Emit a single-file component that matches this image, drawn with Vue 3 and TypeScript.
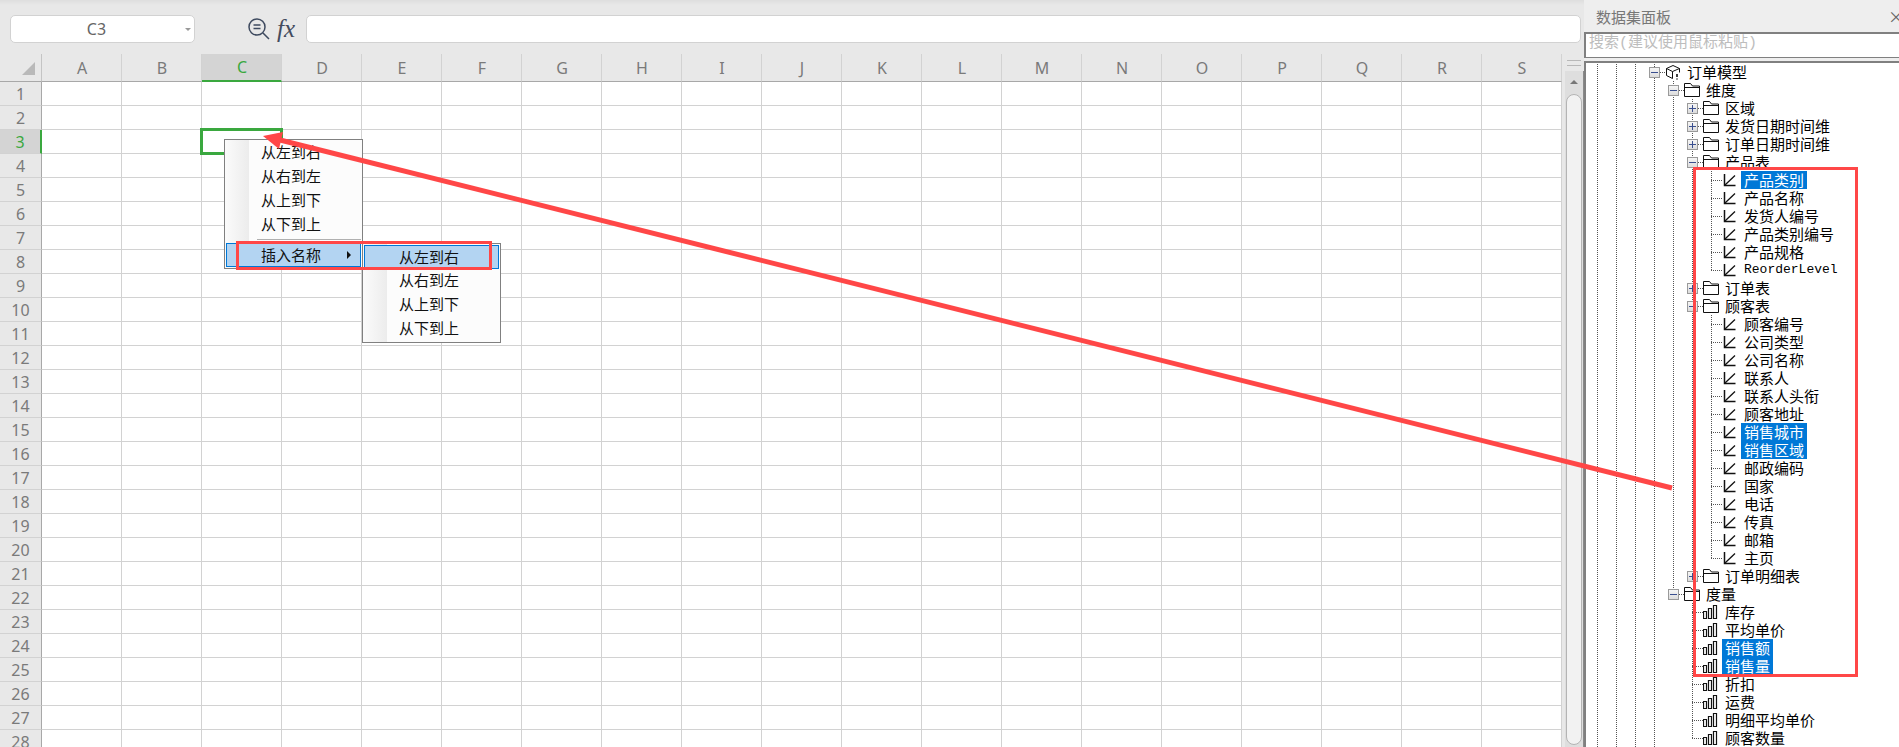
<script setup lang="ts">
type Kind = 'cube' | 'folder' | 'dim' | 'measure'

interface TreeRow {
  label: string
  depth: number
  kind: Kind
  open?: boolean
  selected?: boolean
  mono?: boolean
}

const columns = 'ABCDEFGHIJKLMNOPQRS'.split('')
const rowCount = 28
const sortItems = ['从左到右', '从右到左', '从上到下', '从下到上']

const dims = (labels: string[], selected: string[] = []): TreeRow[] =>
  labels.map((label) => ({ label, depth: 3, kind: 'dim', selected: selected.includes(label) }))

const measures = (labels: string[], selected: string[] = []): TreeRow[] =>
  labels.map((label) => ({ label, depth: 2, kind: 'measure', selected: selected.includes(label) }))

const rows: TreeRow[] = [
  { label: '订单模型', depth: 0, kind: 'cube', open: true },
  { label: '维度', depth: 1, kind: 'folder', open: true },
  { label: '区域', depth: 2, kind: 'folder', open: false },
  { label: '发货日期时间维', depth: 2, kind: 'folder', open: false },
  { label: '订单日期时间维', depth: 2, kind: 'folder', open: false },
  { label: '产品表', depth: 2, kind: 'folder', open: true },
  ...dims(['产品类别', '产品名称', '发货人编号', '产品类别编号', '产品规格'], ['产品类别']),
  { label: 'ReorderLevel', depth: 3, kind: 'dim', mono: true },
  { label: '订单表', depth: 2, kind: 'folder', open: false },
  { label: '顾客表', depth: 2, kind: 'folder', open: true },
  ...dims(
    ['顾客编号', '公司类型', '公司名称', '联系人', '联系人头衔', '顾客地址', '销售城市', '销售区域', '邮政编码', '国家', '电话', '传真', '邮箱', '主页'],
    ['销售城市', '销售区域'],
  ),
  { label: '订单明细表', depth: 2, kind: 'folder', open: false },
  { label: '度量', depth: 1, kind: 'folder', open: true },
  ...measures(['库存', '平均单价', '销售额', '销售量', '折扣', '运费', '明细平均单价', '顾客数量'], ['销售额', '销售量']),
]

const rowH = 18
// dotted guides of the tree: x is relative to the tree box, from/to are row indexes
const guides = [
  { x: 11, from: -1, to: 38 },
  { x: 30, from: -1, to: 38 },
  { x: 49, from: -1, to: 38 },
  { x: 68, from: -1, to: 38 },
  { x: 87, from: 0.5, to: 29.5 },
  { x: 106, from: 1.5, to: 28.5 },
  { x: 125, from: 5.5, to: 11.5 },
  { x: 125, from: 13.5, to: 27.5 },
  { x: 106, from: 29.5, to: 37.5 },
]

const guideStyle = (g: { x: number; from: number; to: number }) => ({
  left: g.x + 'px',
  top: g.from * rowH + 'px',
  height: (g.to - g.from) * rowH + 'px',
})
</script>

<template>
  <div class="app">
    <section class="sheet">
      <header class="toolbar">
        <div class="name-box">
          <span class="name">C3</span>
          <span class="caret"></span>
        </div>
        <svg class="zoom-icon" width="24" height="26" viewBox="0 0 24 26">
          <circle cx="10" cy="11" r="8" fill="none" stroke="#3e4a5f" stroke-width="1.5" />
          <path d="M6.5 9h7M6.5 12.5h7M16 17l6 6" fill="none" stroke="#3e4a5f" stroke-width="1.5" />
        </svg>
        <span class="fx">fx</span>
        <div class="formula"></div>
      </header>

      <div class="body">
        <div class="grid">
          <div class="corner"><span class="corner-mark"></span></div>
          <div v-for="c in columns" :key="c" class="col-head" :class="{ current: c === 'C' }">{{ c }}</div>
          <template v-for="r in rowCount" :key="r">
            <div class="row-head" :class="{ current: r === 3 }">{{ r }}</div>
            <div v-for="c in columns" :key="c + r" class="cell"></div>
          </template>
          <div class="cursor"></div>
        </div>
        <div class="vscroll">
          <div class="grip"></div>
          <div class="track">
            <span class="up"></span>
            <div class="thumb"></div>
          </div>
        </div>
      </div>
    </section>

    <aside class="panel">
      <div class="panel-head">
        <span>数据集面板</span>
        <span class="close">×</span>
      </div>
      <div class="search">搜索(建议使用鼠标粘贴)</div>
      <div class="tree">
        <span v-for="(g, i) in guides" :key="i" class="guide" :style="guideStyle(g)"></span>
        <div v-for="row in rows" :key="row.label" class="tree-row" :style="{ paddingLeft: 63 + row.depth * 19 + 'px' }">
          <template v-if="row.open !== undefined">
            <span class="toggle" :class="{ plus: !row.open }"></span>
            <span class="link short"></span>
          </template>
          <template v-else>
            <span class="spacer"></span>
            <span class="link long"></span>
          </template>
          <svg class="node-icon" width="16" height="16" viewBox="0 0 16 16">
            <g v-if="row.kind === 'cube'" fill="none" stroke="#111">
              <path d="M1.500 4.500 8 1.500l6.500 3v4M1.500 4.500v7l6 3M1.500 4.500l6 3 7-3M7.500 7.500v7" />
              <path d="M12 10v3M12 14.500v1" stroke-width="1.600" />
            </g>
            <path v-else-if="row.kind === 'folder'" d="M.5 14.500v-13h6l2 2.500h7v10.500zM.5 5.500h15" fill="none" stroke="#111" />
            <g v-else-if="row.kind === 'dim'" fill="none" stroke="#111">
              <path d="M2.500 2v11.500h11" stroke-width="1.500" />
              <path d="M3 13 13 3.500" stroke-width="1.300" />
            </g>
            <g v-else fill="none" stroke="#111" stroke-width="1.200">
              <path d="M.5 7.500h3v7h-3zM5.500 4.500h3v10h-3zM10.500 1.500h3v13h-3z" />
            </g>
          </svg>
          <span class="label" :class="{ selected: row.selected, mono: row.mono }">{{ row.label }}</span>
        </div>
      </div>
    </aside>

    <div class="menu">
      <div v-for="item in sortItems" :key="item" class="menu-item">{{ item }}</div>
      <div class="separator"></div>
      <div class="menu-item active">插入名称<span class="arrow"></span></div>
    </div>
    <div class="menu sub">
      <div
        v-for="(item, i) in sortItems"
        :key="item"
        class="menu-item"
        :class="{ active: i === 0 }"
      >{{ item }}</div>
    </div>

    <div class="mark mark-menu"></div>
    <div class="mark mark-tree"></div>
    <svg class="arrow-layer" width="1899" height="747" viewBox="0 0 1899 747">
      <line x1="1672" y1="488" x2="280" y2="140" stroke="#ff4747" stroke-width="5" />
      <polygon points="263,136 283,132 279,149" fill="#ff4747" />
    </svg>
  </div>
</template>

<style scoped>
.app {
  position: relative;
  display: flex;
  width: 1899px;
  height: 747px;
  overflow: hidden;
  background: #fff;
  font-family: "Noto Sans CJK SC", "Noto Sans", sans-serif;
}

.sheet {
  display: flex;
  flex-direction: column;
  width: 1584px;
  flex: none;
}

.toolbar {
  display: flex;
  align-items: center;
  height: 54px;
  padding: 4px 3px 0 10px;
  box-sizing: border-box;
  background: linear-gradient(#dedede, #e8e8e8 5px);
}

.name-box {
  position: relative;
  display: flex;
  align-items: center;
  justify-content: center;
  width: 185px;
  height: 28px;
  padding-right: 12px;
  box-sizing: border-box;
  background: #fff;
  border: 1px solid #d2d2d2;
  border-radius: 5px;
  color: #666;
  font: 16px "Noto Sans", sans-serif;
}

.caret {
  position: absolute;
  right: 3px;
  top: 12px;
  border-left: 3px solid transparent;
  border-right: 3px solid transparent;
  border-top: 3px solid #999;
}

.zoom-icon {
  margin: 0 0 0 52px;
}

.fx {
  width: 26px;
  margin-left: 6px;
  color: #444c5e;
  font: italic 25px "Liberation Serif", serif;
}

.formula {
  flex: 1;
  height: 28px;
  margin-left: 3px;
  box-sizing: border-box;
  background: #fff;
  border: 1px solid #d2d2d2;
  border-radius: 5px;
}

.body {
  display: flex;
  flex: 1;
  min-height: 0;
}

.grid {
  position: relative;
  display: grid;
  grid-template-columns: 42px repeat(19, 80px);
  grid-auto-rows: 24px;
  grid-template-rows: 28px;
  width: 1562px;
  flex: none;
  overflow: hidden;
  color: #7a7a7a;
  font: 16px "Noto Sans", sans-serif;
}

.corner {
  position: relative;
  background: #e8e8e8;
  border-right: 1px solid #c4c4c4;
  border-bottom: 1px solid #a8a8a8;
}

.corner-mark {
  position: absolute;
  left: 22px;
  top: 8px;
  border-left: 13px solid transparent;
  border-bottom: 13px solid #b9b9b9;
}

.col-head {
  display: flex;
  align-items: center;
  justify-content: center;
  padding-left: 1px;
  background: #e8e8e8;
  border-right: 1px solid #d2d2d2;
  border-bottom: 1px solid #a8a8a8;
}

.col-head.current {
  background: #d4d4d4;
  border-bottom: 2px solid #3aa83f;
  color: #3aa83f;
}

.row-head {
  display: flex;
  align-items: center;
  justify-content: center;
  background: #e8e8e8;
  border-right: 1px solid #a8a8a8;
  border-bottom: 1px solid #d2d2d2;
}

.row-head.current {
  background: #d4d4d4;
  border-right: 2px solid #3aa83f;
  color: #3aa83f;
}

.cell {
  border-right: 1px solid #d2d2d2;
  border-bottom: 1px solid #d2d2d2;
}

.cursor {
  position: absolute;
  left: 200px;
  top: 74px;
  width: 83px;
  height: 27px;
  box-sizing: border-box;
  border: 3px solid #3aa83f;
}

.vscroll {
  display: flex;
  flex-direction: column;
  flex: 1;
  background: #e8e8e8;
}

.grip {
  height: 17px;
  flex: none;
  margin: 0 3px 0 5px;
  box-sizing: border-box;
  padding-top: 6px;
}

.grip::before {
  content: "";
  display: block;
  height: 4px;
  border-top: 1px solid #b8b8b8;
  border-bottom: 1px solid #b8b8b8;
}

.track {
  display: flex;
  flex-direction: column;
  align-items: center;
  flex: 1;
  background: #dedede;
  border-right: 1px solid #8a8a8a;
  border-left: 3px solid #e8e8e8;
}

.up {
  margin: 9px 0 10px;
  border-left: 4px solid transparent;
  border-right: 4px solid transparent;
  border-bottom: 4px solid #777;
}

.thumb {
  width: 16px;
  flex: 1;
  margin-bottom: 2px;
  box-sizing: border-box;
  background: #f2f2f2;
  border: 1px solid #b4b4b4;
  border-radius: 8px;
}

.panel {
  display: flex;
  flex-direction: column;
  flex: 1;
  min-width: 0;
  background: #eee;
}

.panel-head {
  display: flex;
  align-items: center;
  justify-content: space-between;
  height: 32px;
  flex: none;
  padding-left: 12px;
  box-sizing: border-box;
  color: #777;
  font-size: 15px;
}

.close {
  margin-right: -5px;
  color: #666;
  font-size: 16px;
}

.search {
  height: 26px;
  flex: none;
  padding-left: 3px;
  box-sizing: border-box;
  background: #fff;
  border-top: 2px solid #808080;
  border-bottom: 1px solid #808080;
  border-left: 2px solid #808080;
  color: #bdbdbd;
  font-family: "Liberation Mono", "Noto Sans CJK SC", monospace;
  font-size: 15px;
  line-height: 20px;
}

.tree {
  position: relative;
  flex: 1;
  margin-top: 3px;
  min-height: 0;
  background: #fff;
  border-top: 2px solid #808080;
  border-left: 2px solid #808080;
  overflow: hidden;
}

.guide {
  position: absolute;
  border-left: 1px dotted #555;
}

.tree-row {
  position: relative;
  display: flex;
  align-items: center;
  height: 18px;
  color: #000;
  font-size: 15px;
}

.toggle {
  position: relative;
  width: 11px;
  height: 11px;
  flex: none;
  box-sizing: border-box;
  background: linear-gradient(#f6f6f6, #dcdcdc);
  border: 1px solid #9a9a9a;
}

.toggle::before {
  content: "";
  position: absolute;
  left: 1px;
  top: 4px;
  width: 7px;
  height: 1px;
  background: #3a4f8f;
}

.toggle.plus::after {
  content: "";
  position: absolute;
  left: 4px;
  top: 1px;
  width: 1px;
  height: 7px;
  background: #3a4f8f;
}

.spacer {
  width: 5px;
  flex: none;
}

.link {
  flex: none;
  height: 0;
  border-top: 1px dotted #555;
}

.link.short {
  width: 5px;
}

.link.long {
  width: 11px;
}

.node-icon {
  flex: none;
  margin-right: 3px;
  background: #fff;
}

.label {
  padding: 0 3px;
  line-height: 18px;
  white-space: nowrap;
}

.label.selected {
  background: #0078d7;
  color: #fff;
}

.label.mono {
  font-family: "Liberation Mono", monospace;
  font-size: 13px;
}

.menu {
  position: absolute;
  left: 224px;
  top: 139px;
  width: 139px;
  padding: 1px;
  box-sizing: border-box;
  background: linear-gradient(90deg, #fbfbfb, #ececec 24px, #fcfcfc 24px);
  border: 1px solid #808080;
  color: #111;
  font-size: 15px;
}

.menu.sub {
  left: 362px;
  top: 243px;
  height: 100px;
}

.menu-item {
  position: relative;
  height: 24px;
  padding-left: 35px;
  line-height: 22px;
}

.menu-item.active {
  height: 24px;
  line-height: 21px;
  box-sizing: border-box;
  background: #b3d4f2;
  border: 1px solid #0078d7;
  padding-left: 34px;
}

.separator {
  height: 4px;
  margin-top: 2px;
  margin-left: 31px;
  box-sizing: border-box;
  border-top: 1px solid #b0b0b0;
  background: #fcfcfc;
}

.arrow {
  position: absolute;
  left: 120px;
  top: 7px;
  border-top: 4px solid transparent;
  border-bottom: 4px solid transparent;
  border-left: 4px solid #111;
}

.mark {
  position: absolute;
  box-sizing: border-box;
  border: 3px solid #ff4747;
}

.mark-menu {
  left: 236px;
  top: 241px;
  width: 256px;
  height: 29px;
}

.mark-tree {
  left: 1693px;
  top: 167px;
  width: 165px;
  height: 510px;
}

.arrow-layer {
  position: absolute;
  left: 0;
  top: 0;
  pointer-events: none;
}
</style>
